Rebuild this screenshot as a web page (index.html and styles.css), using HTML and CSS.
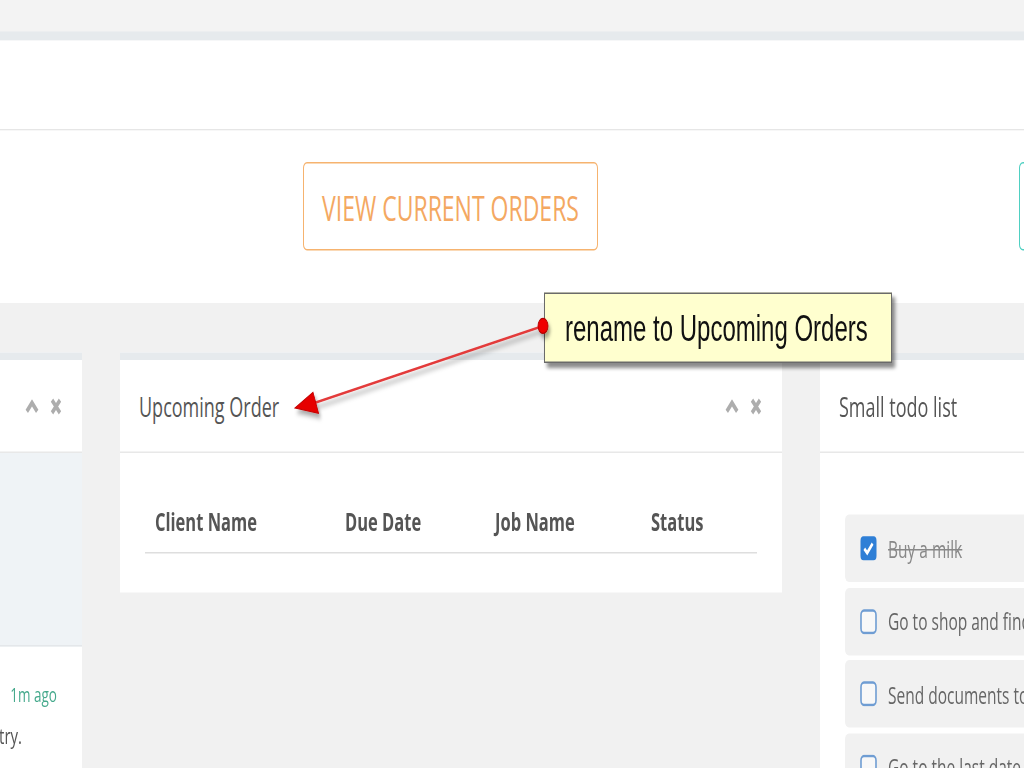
FILE: index.html
```html
<!DOCTYPE html>
<html lang="en">
<head>
  <meta charset="UTF-8" />
  <meta name="viewport" content="width=device-width, initial-scale=1.0" />
  <title>Orders Dashboard</title>
  <link rel="stylesheet" href="styles.css">
</head>
<body>
  <div class="page">
    <div class="topbar"></div>
    <div class="band"></div>

    <div class="actions">
      <a class="btn btn-orange" href="#">View current orders</a>
      <a class="btn btn-teal" href="#">Add new order</a>
    </div>

    <div class="panels">
      <section class="panel panel-left">
        <div class="panel-head">
          <h3></h3>
          <div class="tools">
            <svg width="14" height="10" viewBox="0 0 14 10"><polyline points="1.8,8.3 7,2.6 12.2,8.3" fill="none" stroke="#adadad" stroke-width="3.2"/></svg>
            <svg width="12" height="12" viewBox="0 0 12 12"><path d="M2 1.8 L10 10.2 M10 1.8 L2 10.2" stroke="#adadad" stroke-width="3.2"/></svg>
          </div>
        </div>
        <div class="feed-box"></div>
        <div class="feed">
          <div class="feed-time"><span>1m ago</span></div>
          <div class="feed-text"><span>Lorem Ipsum is simply dummy text of the printing and typesetting industry.</span></div>
        </div>
      </section>

      <section class="panel panel-mid">
        <div class="panel-head">
          <h3>Upcoming Order</h3>
          <div class="tools">
            <svg width="14" height="10" viewBox="0 0 14 10"><polyline points="1.8,8.3 7,2.6 12.2,8.3" fill="none" stroke="#adadad" stroke-width="3.2"/></svg>
            <svg width="12" height="12" viewBox="0 0 12 12"><path d="M2 1.8 L10 10.2 M10 1.8 L2 10.2" stroke="#adadad" stroke-width="3.2"/></svg>
          </div>
        </div>
        <div class="panel-body">
          <table class="orders">
            <thead>
              <tr>
                <th class="c1">Client Name</th>
                <th class="c2">Due Date</th>
                <th class="c3">Job Name</th>
                <th class="c4">Status</th>
              </tr>
            </thead>
          </table>
        </div>
      </section>

      <section class="panel panel-todo">
        <div class="panel-head">
          <h3>Small todo list</h3>
        </div>
        <ul class="todo">
          <li class="done">
            <svg width="17" height="17" viewBox="0 0 17 17"><rect x="0.5" y="0.5" width="16" height="16" rx="3" fill="#2f7fd6"/><path d="M4.3 8.8 L7.2 11.6 L12.6 5.4" fill="none" stroke="#fff" stroke-width="2.3"/></svg>
            <span>Buy a milk</span>
          </li>
          <li>
            <svg width="17" height="17" viewBox="0 0 17 17"><rect x="1" y="1" width="15" height="15" rx="3" fill="#f8f8f8" stroke="#6f9dd3" stroke-width="1.6"/></svg>
            <span>Go to shop and find some products.</span>
          </li>
          <li>
            <svg width="17" height="17" viewBox="0 0 17 17"><rect x="1" y="1" width="15" height="15" rx="3" fill="#f8f8f8" stroke="#6f9dd3" stroke-width="1.6"/></svg>
            <span>Send documents to Mike</span>
          </li>
          <li>
            <svg width="17" height="17" viewBox="0 0 17 17"><rect x="1" y="1" width="15" height="15" rx="3" fill="#f8f8f8" stroke="#6f9dd3" stroke-width="1.6"/></svg>
            <span>Go to the last date</span>
          </li>
        </ul>
      </section>
    </div>

    <div class="callout">rename to Upcoming Orders</div>

    <svg class="arrow" width="1024" height="512" viewBox="0 0 1024 512">
      <defs>
        <filter id="shade" x="-10%" y="-30%" width="130%" height="180%">
          <feDropShadow dx="2" dy="3" stdDeviation="1.6" flood-color="#000" flood-opacity="0.35"/>
        </filter>
      </defs>
      <g filter="url(#shade)">
        <line x1="543" y1="217.3" x2="315" y2="268.5" stroke="#e33a3a" stroke-width="1.8"/>
        <polygon points="295,272 313,261.5 318.5,275.5" fill="#e60000" stroke="#c40000" stroke-width="0.8"/>
        <circle cx="543" cy="217.3" r="5" fill="#f00000" stroke="#b00000" stroke-width="0.8"/>
      </g>
    </svg>
  </div>
</body>
</html>
```

FILE: styles.css
```css
html {
  overflow: hidden;
  background-color: #f1f1f1;
}
body {
  margin: 0;
  padding: 0;
  height: 768px;
  font-family: "Open Sans", sans-serif;
  color: #555;
}

/* the shot is stretched 1.5x vertically, so lay out at 512 tall and stretch */
.page {
  position: relative;
  width: 1024px;
  height: 512px;
  overflow: hidden;
  transform: scaleY(1.5);
  transform-origin: 0 0;
}

.topbar {
  height: 21px;
  background-color: #f3f3f3;
  border-bottom: 6px solid #e6eaed;
}
.band {
  height: 59px;
  background-color: #fff;
  border-bottom: 1px solid #e6e6e6;
}

.actions {
  display: flex;
  gap: 421px;
  padding: 21px 0 35px 303px;
  background-color: #fff;
}
.btn {
  flex: none;
  box-sizing: border-box;
  width: 295px;
  height: 59px;
  display: flex;
  align-items: center;
  justify-content: center;
  border-radius: 4px;
  font-size: 23px;
  text-transform: uppercase;
  text-decoration: none;
  white-space: nowrap;
}
.btn-orange {
  border: 1.5px solid #f6b36f;
  color: #f4a862;
}
.btn-teal {
  border: 1.5px solid #4fd0c2;
  color: #3fc2b4;
}

.panels {
  display: flex;
  align-items: flex-start;
  gap: 38px;
  margin-top: 33px;
}
.panel {
  flex: none;
  background-color: #fff;
  border-top: 5px solid #e6eaed;
}
.panel-left {
  width: 82px;
  height: 280px;
}
.panel-mid {
  width: 662px;
}
.panel-todo {
  width: 662px;
  height: 280px;
}

.panel-head {
  height: 61px;
  display: flex;
  align-items: center;
  justify-content: space-between;
  padding: 0 20px 0 19px;
  border-bottom: 1px solid #e8e8e8;
}
.panel-head h3 {
  margin: 0;
  font-size: 18px;
  font-weight: 400;
  color: #555;
  white-space: nowrap;
}
.tools {
  display: flex;
  align-items: center;
  gap: 11px;
}

.feed-box {
  height: 128px;
  background-color: #eff3f6;
  border-bottom: 1px solid #e4e7ea;
}
.feed {
  padding-top: 22px;
}
.feed-time, .feed-text {
  display: flex;
  justify-content: flex-end;
  overflow: hidden;
  white-space: nowrap;
}
.feed-time {
  padding-right: 25px;
  font-size: 13.5px;
  line-height: 20px;
  color: #45a98c;
}
.feed-text {
  margin-top: 6px;
  padding-right: 60px;
  font-size: 15px;
  line-height: 22px;
  color: #555;
}

.panel-body {
  padding: 27px 25px 26px;
}
.orders {
  width: 100%;
  border-collapse: collapse;
}
.orders th {
  height: 36px;
  padding: 0 10px 3px;
  text-align: left;
  font-size: 16.5px;
  font-weight: 700;
  color: #555;
  border-bottom: 1.5px solid #dedede;
  white-space: nowrap;
}
.orders .c1 { width: 170px; }
.orders .c2 { width: 130px; }
.orders .c3 { width: 136px; }

.todo {
  list-style: none;
  margin: 0;
  padding: 41px 0 0 25px;
}
.todo li {
  height: 45px;
  margin-bottom: 3.6px;
  display: flex;
  align-items: center;
  gap: 11px;
  padding-left: 15px;
  background-color: #f1f1f1;
  border-radius: 4px;
  font-size: 15.5px;
  color: #666;
  white-space: nowrap;
}
.todo svg {
  flex: none;
}
.todo .done span {
  text-decoration: line-through;
  color: #888;
}

.callout {
  position: absolute;
  left: 544px;
  top: 195px;
  box-sizing: border-box;
  width: 348px;
  height: 47px;
  padding-left: 20px;
  display: flex;
  align-items: center;
  background-color: #ffffcf;
  border: 1px solid #6a6a6a;
  box-shadow: 3px 3px 3px rgba(0,0,0,0.45);
  font-family: "Liberation Sans", Arial, sans-serif;
  font-size: 24px;
  color: #111;
  white-space: nowrap;
  z-index: 2;
}
.arrow {
  position: absolute;
  left: 0;
  top: 0;
  pointer-events: none;
  z-index: 3;
}
```
